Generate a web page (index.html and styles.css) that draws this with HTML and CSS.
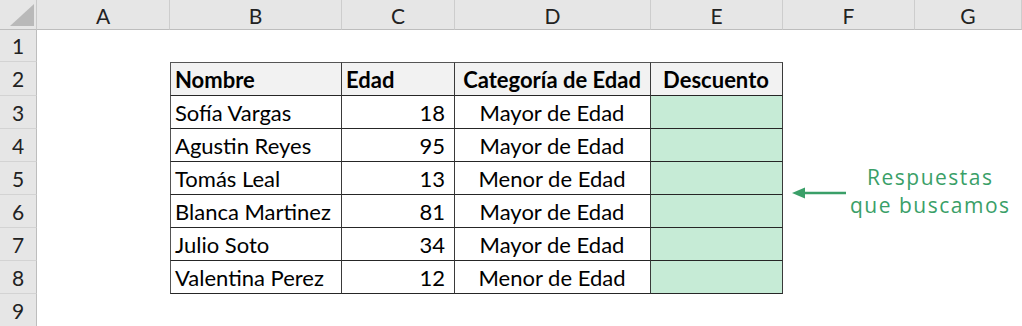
FILE: index.html
```html
<!DOCTYPE html>
<html lang="es">
<head>
<meta charset="utf-8">
<title>Hoja</title>
<link rel="stylesheet" href="styles.css">
</head>
<body>
<div class="sheet">
  <div class="corner"><svg width="37" height="30" viewBox="0 0 37 30"><polygon points="10,26 34,26 34,4" fill="#b9b9b9"/></svg></div>
  <div class="ch">A</div><div class="ch">B</div><div class="ch">C</div><div class="ch">D</div><div class="ch">E</div><div class="ch">F</div><div class="ch">G</div>

  <div class="rh">1</div><div class="c"></div><div class="c"></div><div class="c"></div><div class="c"></div><div class="c"></div><div class="c"></div><div class="c"></div>

  <div class="rh">2</div><div class="c"></div>
  <div class="t th first top">Nombre</div>
  <div class="t th top">Edad</div>
  <div class="t th top center">Categoría de Edad</div>
  <div class="t th top center">Descuento</div>
  <div class="c"></div><div class="c"></div>

  <div class="rh">3</div><div class="c"></div>
  <div class="t first">Sofía Vargas</div><div class="t num">18</div><div class="t center">Mayor de Edad</div><div class="t ans"></div>
  <div class="c"></div><div class="c"></div>

  <div class="rh">4</div><div class="c"></div>
  <div class="t first">Agustin Reyes</div><div class="t num">95</div><div class="t center">Mayor de Edad</div><div class="t ans"></div>
  <div class="c"></div><div class="c"></div>

  <div class="note">
    <svg class="arrow" width="54" height="12" viewBox="0 0 54 12"><line x1="11" y1="6" x2="54" y2="6" stroke="#3a9f68" stroke-width="2.6"/><polygon points="0,6 13,0.5 13,11.5" fill="#3a9f68"/></svg>
    <div class="note-text">Respuestas<br>que buscamos</div>
  </div>

  <div class="rh">5</div><div class="c"></div>
  <div class="t first">Tomás Leal</div><div class="t num">13</div><div class="t center">Menor de Edad</div><div class="t ans"></div>

  <div class="rh">6</div><div class="c"></div>
  <div class="t first">Blanca Martinez</div><div class="t num">81</div><div class="t center">Mayor de Edad</div><div class="t ans"></div>

  <div class="rh">7</div><div class="c"></div>
  <div class="t first">Julio Soto</div><div class="t num">34</div><div class="t center">Mayor de Edad</div><div class="t ans"></div>
  <div class="c"></div><div class="c"></div>

  <div class="rh">8</div><div class="c"></div>
  <div class="t first">Valentina Perez</div><div class="t num">12</div><div class="t center">Menor de Edad</div><div class="t ans"></div>
  <div class="c"></div><div class="c"></div>

  <div class="rh">9</div><div class="c"></div><div class="c"></div><div class="c"></div><div class="c"></div><div class="c"></div><div class="c"></div><div class="c"></div>
</div>
</body>
</html>
```
FILE: styles.css
```css
html, body {
  margin: 0;
  padding: 0;
  background: #ffffff;
}

body {
  width: 1022px;
  height: 326px;
  overflow: hidden;
  font-family: Lato, "Liberation Sans", sans-serif;
  color: #000;
}

.sheet {
  display: grid;
  grid-template-columns: 37px 133px 172px 113px 196px 132px 132px 1fr;
  grid-template-rows: 30px 32px 34px 33px 33px 33px 33px 33px 33px 33px;
  width: 1022px;
}

.corner {
  background: #e6e6e6;
  border-right: 1px solid #c9c9c9;
  border-bottom: 1px solid #bdbdbd;
  box-sizing: border-box;
}

.corner svg {
  display: block;
}

.ch {
  background: #e6e6e6;
  border-right: 1px solid #cdcdcd;
  border-bottom: 1px solid #bdbdbd;
  box-sizing: border-box;
  display: flex;
  align-items: center;
  justify-content: center;
  font-size: 21px;
  color: #222;
  padding-top: 1px;
}

.rh {
  background: #e6e6e6;
  border-right: 1px solid #bdbdbd;
  border-bottom: 1px solid #d3d3d3;
  box-sizing: border-box;
  display: flex;
  align-items: center;
  justify-content: center;
  font-size: 21px;
  color: #222;
}

.c {
  background: #fff;
}

.t {
  box-sizing: border-box;
  border-right: 1px solid #3a3a3a;
  border-bottom: 1px solid #262626;
  display: flex;
  align-items: center;
  padding: 0 5px 0 4px;
  font-size: 22px;
  white-space: nowrap;
}

.first {
  border-left: 1px solid #555;
}

.top {
  border-top: 1px solid #555;
}

.th {
  background: #f2f2f2;
  font-weight: 700;
}

.center {
  justify-content: center;
}

.num {
  justify-content: flex-end;
  padding-right: 9px;
}

.ans {
  background: #c6ebd6;
}

.note {
  grid-column: 7 / 9;
  grid-row: 6 / 8;
  display: flex;
  align-items: center;
  padding-left: 9px;
}

.arrow {
  display: block;
  margin-bottom: 5px;
  flex: none;
}

.note-text {
  margin-left: 4px;
  padding-bottom: 7px;
  text-align: center;
  font-family: "Open Sans", Lato, sans-serif;
  font-size: 21px;
  line-height: 27.5px;
  letter-spacing: 1.5px;
  color: #3a9f68;
  white-space: nowrap;
}
```
